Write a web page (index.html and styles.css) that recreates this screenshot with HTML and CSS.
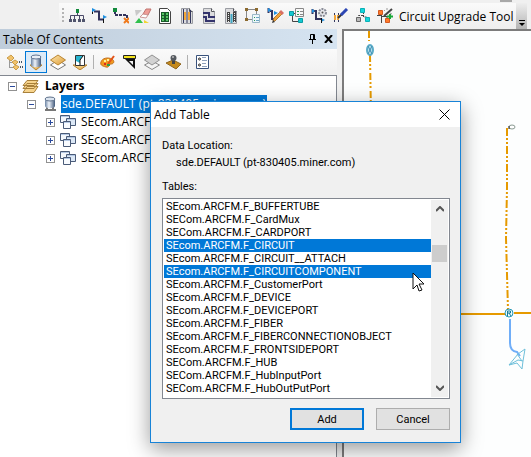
FILE: index.html
```html
<!DOCTYPE html>
<html lang="en">
<head>
    <meta charset="UTF-8">
    <meta name="viewport" content="width=device-width, initial-scale=1.0">
    <title>Add Table</title>
    <link rel="stylesheet" href="styles.css">
</head>
<body>

    <!-- shapes used more than once -->
    <svg class="defs" aria-hidden="true">
        <defs>
            <linearGradient id="metal"><stop offset="0" stop-color="#6b83a3"/><stop offset=".4" stop-color="#eef3fa"/><stop offset="1" stop-color="#41587a"/></linearGradient>
            <linearGradient id="gold" x2="1" y2="1"><stop offset="0" stop-color="#ffe9b0"/><stop offset="1" stop-color="#dc9a35"/></linearGradient>
            <g id="file"><path d="M2.500 .5h8l3 3v12h-11z" fill="#dcdcde" stroke="#9a9ca2"/><path d="M10.500 .5v3h3" fill="#fff" stroke="#55575c"/></g>
            <g id="tables"><path d="M.5 .5h9v7h-9z" fill="#f3f7fc" stroke="#4a5b78"/><path d="M6.500 3.500h9v7h-9z" fill="#dce8f6" stroke="#4a5b78"/><path d="M3.500 6.500h7v7h-7z" fill="#f8fbff" stroke="#4a5b78"/><path d="M1 1.500h8M4 7.500h6M7 4.500h8" stroke="#b4c8e4"/></g>
        </defs>
    </svg>

    <div class="app">
        <div class="toolbar-row">
            <div class="toolbar">
                <span class="grip"></span>
                <button class="tool" aria-label="Trace tree"><svg width="16" height="16"><path d="M8.500 4v4M1.500 11V7.500h13V11M5.500 7.500V11M10.500 7.500V11" fill="none" stroke="#4a4a68"/><path d="M7 1h3v4H7z" fill="#128a3c"/><path d="M0 11h3v3H0zM4 11h3v3H4zM9 11h3v3H9zM13 11h3v3h-3z" fill="#50546c"/></svg></button>
                <button class="tool" aria-label="Trace between flags"><svg width="16" height="16"><path d="M3 3.500h5v8h5" fill="none" stroke="#33335c" stroke-width="2"/><path d="M1.500 1v5M12.500 8v7" stroke="#111"/><path d="M1 0l4 2-4 2zM12 7l4 2-4 2z" fill="#1f8fe0"/></svg></button>
                <button class="tool" aria-label="Trace to fault"><svg width="16" height="16"><path d="M2 3v4h12v3" fill="none" stroke="#33335c" stroke-width="2" stroke-dasharray="3 1"/><path d="M0 0h4v4H0z" fill="#128a3c"/><path d="M11 10l5 5M16 10l-5 5" stroke="#f07a1c" stroke-width="2"/></svg></button>
                <button class="tool" aria-label="Erase trace"><svg width="17" height="16"><path d="M0 2h7L1 8z" fill="#c9c9c9"/><path d="M8 6l3-5h5l-3 6z" fill="#ef9c96" stroke="#c07470"/><path d="M5 9l3-3 5 1-2 3z" fill="#fff" stroke="#cc9896"/><path d="M0 15l4-5 4 5z" fill="#30c04c"/><path d="M9 15v-3l5 3z" fill="#f2d533"/></svg></button>
                <button class="tool" aria-label="Rack report"><svg width="16" height="16"><path d="M2.500 .5h8l3 3v12h-11z" fill="#fff" stroke="#444"/><path d="M4 4h8v10H4z" fill="#1a5c2b"/><path d="M5 5h2v2H5zM9 5h2v2H9zM5 8h2v2H5zM9 8h2v2H9zM5 11h2v2H5zM9 11h2v2H9z" fill="#57c765"/></svg></button>
                <button class="tool" aria-label="Fiber report"><svg width="16" height="16"><use href="#file"/><path d="M4.500 1v14M8 1v14M11.500 2v13" stroke="#34385e"/><path d="M6 4v8M10 4v8" stroke="#f2a63a" stroke-width="2"/></svg></button>
                <button class="tool" aria-label="Circuit report"><svg width="16" height="16"><use href="#file"/><path d="M2 5h6v4h6M2 9h3v4h9" fill="none" stroke="#33336c" stroke-width="2"/></svg></button>
                <button class="tool" aria-label="Device report"><svg width="16" height="16"><use href="#file"/><path d="M4 4h3v10H4zM10 4h3v10h-3z" fill="#444"/><path d="M5.500 5v9M11.500 5v9" stroke="#eee" stroke-dasharray="1 1"/><path d="M8.500 6v9" stroke="#43a8c4" stroke-width="2"/></svg></button>
                <button class="tool" aria-label="Select area"><svg width="16" height="16"><path d="M1.500 1.500h10v10h-10z" fill="none" stroke="#888"/><path d="M0 0h3v3H0zM10 0h3v3h-3zM0 10h3v3H0z" fill="#8c6a2f"/><path d="M7.500 6.500h7v8h-7z" fill="#eef7fb" stroke="#9ab8c8"/><path d="M9 9.500h1M9 12.500h1" stroke="#2a9a50"/><path d="M11 9.500h3M11 12.500h3" stroke="#6ba5c4"/></svg></button>
                <button class="tool" aria-label="Edit path"><svg width="17" height="16"><path d="M1.500 0v5M3 3h2v8h2" fill="none" stroke="#33335c" stroke-width="2"/><path d="M1 0l4 2-4 2zM7 3l4 2-4 2z" fill="#1f8fe0"/><path d="M6 13l1-3 6-6 2 2-7 7z" fill="#f3a338" stroke="#b47c38"/><path d="M12 4l2-2 3 3-2 2z" fill="#d86f65"/><path d="M5 15l1-3 2 2z" fill="#333"/></svg></button>
                <button class="tool" aria-label="Connection list"><svg width="16" height="16"><path d="M3.500 8v5.500H9M4 5.500h4" fill="none" stroke="#444"/><path d="M.5 3.500h4v4h-4zM9.500 10.500h4v4h-4z" fill="#13c8d0" stroke="#0a9ca4"/><path d="M6.500 .5h8v8h-8z" fill="#f8f8f8" stroke="#888"/><path d="M8 3.500h2M8 6.500h2" stroke="#2a9a50"/><path d="M11 3.500h3M11 6.500h3" stroke="#888"/></svg></button>
                <button class="tool" aria-label="Trace settings"><svg width="16" height="16"><path d="M1.500 1v5M3 3h2v8h6" fill="none" stroke="#33335c" stroke-width="2"/><path d="M1 1l3 2-3 2zM10 10l4 2-4 2z" fill="#1f8fe0"/><path d="M10.500 10v5" stroke="#111"/><circle cx="11.500" cy="4.500" r="3.500" fill="#e8e8ec" stroke="#888b96" stroke-width="2" stroke-dasharray="2 1"/><circle cx="11.500" cy="4.500" r="1" fill="#555"/></svg></button>
                <button class="tool" aria-label="Splice"><svg width="16" height="16"><path d="M1.500 5v9M5.500 5v9" stroke="#34385e"/><path d="M1 7h2v5H1zM4 7h2v5H4z" fill="#f2a63a"/><path d="M5 10l5-5" stroke="#333" stroke-width="2"/><path d="M8 7l6-6" stroke="#2c46b4" stroke-width="3"/></svg></button>
                <button class="tool" aria-label="Network"><svg width="16" height="16"><path d="M8.500 4v5h4v2M8 7.500H3.500V11" fill="none" stroke="#444" stroke-dasharray="2 1"/><path d="M5.500 .5h4v4h-4zM10.500 9.500h4v4h-4z" fill="#13d6dc" stroke="#0ab0b6"/><path d="M1.500 9.500h4v4h-4z" fill="#b9b9b9" stroke="#666"/></svg></button>
                <button class="tool" aria-label="Upgrade circuit"><svg width="16" height="16"><path d="M4.500 6v9M4 8.500h6V12M0 7.500h4" fill="none" stroke="#444"/><path d="M1.500 2.500h4v4h-4zM8.500 10.500h4v4h-4z" fill="#ff7a2a" stroke="#d45a20"/><path d="M7 8l8-7" stroke="#444" stroke-width="2"/><path d="M7 2l1 1M10 0v2M13 5l2 1" stroke="#999"/><path d="M13 6v5M10 8.500h6" stroke="#18a838" stroke-width="2"/></svg></button>
                <button class="text-tool">Circuit Upgrade Tool</button>
                <button class="overflow" aria-label="Toolbar options"><svg width="6" height="6"><path d="M0 .5h6" stroke="#000"/><path d="M0 3h6L3 6z"/></svg></button>
            </div>
        </div>

        <div class="workspace">
            <div class="toc">
                <div class="toc-header">
                    <span>Table Of Contents</span>
                    <button class="pin" aria-label="Auto hide"><svg width="7" height="10"><path d="M1.500 5V.5h4V5M0 5.500h7M3.500 6v4M4.500 1v4" fill="none" stroke="#000"/></svg></button>
                    <button aria-label="Close panel"><svg width="9" height="8"><path d="M1 0l7 8M8 0L1 8" stroke="#000" stroke-width="2"/></svg></button>
                </div>
                <div class="toc-tools">
                    <button aria-label="List by drawing order"><svg width="17" height="16"><path d="M3.500 6v8M3 8.500h5M3 13.500h5" fill="none" stroke="#999"/><path d="M1 4l4-3 3 3-3 3zM6 8l3-2 3 2-3 3zM7 13l3-2 3 2-3 3z" fill="#f2c36c" stroke="#c99c4a"/><path d="M13 8h4M14 13h3" stroke="#456" stroke-width="2" stroke-dasharray="1 1"/></svg></button>
                    <button class="active" aria-label="List by source"><svg width="16" height="17"><path d="M2 11h12l-6 5z" fill="url(#gold)" stroke="#b98431"/><path d="M3 3v8c0 3 10 3 10 0V3z" fill="url(#metal)"/><ellipse cx="8" cy="3" rx="5" ry="2" fill="#e8eef6" stroke="#5f7391"/></svg></button>
                    <button aria-label="List by visibility"><svg width="16" height="16"><path d="M.5 11L8 6l7.500 5L8 15.500z" fill="#fff" stroke="#777"/><path d="M.5 6L8 1l7.500 5L8 11z" fill="url(#gold)" stroke="#b98431"/></svg></button>
                    <button aria-label="List by selection"><svg width="16" height="16"><path d="M1 11h14l-7 5z" fill="url(#gold)" stroke="#b98431"/><path d="M3.500 1.500h9v10h-9z" fill="#fff" stroke="#333"/><path d="M4 2h7l-3 4v3L4 7z" fill="#27b5d0"/><path d="M11 2L8 6v5" fill="none" stroke="#111"/></svg></button>
                    <span class="separator"></span>
                    <button aria-label="Symbology"><svg width="16" height="16"><path d="M1 8c1-4 7-5 11-3 3 2 2 5-1 5s-1 4-5 3S0 11 1 8z" fill="#f29a1e" stroke="#c0701c"/><path d="M4 7h2M7 6h2" stroke="#fff29a" stroke-width="2"/><path d="M4 10h2" stroke="#d92a20" stroke-width="2"/><path d="M8 10l6-8" stroke="#e2541b" stroke-width="2"/><path d="M7 11h3" stroke="#2ba04a" stroke-width="2"/></svg></button>
                    <button aria-label="Scale"><svg width="16" height="16"><path d="M1.500 1.500h12v3h-12z" fill="#f4e41e" stroke="#222"/><path d="M3 5h10v10zM7 7l4 4V7z" fill="#111" fill-rule="evenodd"/></svg></button>
                    <button aria-label="Layers"><svg width="16" height="16"><path d="M.5 11L8 7l7.500 4L8 15.500z" fill="#f4f4f4" stroke="#888"/><path d="M.5 6L8 1l7.500 5L8 11z" fill="#d2d2d2" stroke="#909090"/></svg></button>
                    <button aria-label="Stamp"><svg width="16" height="16"><path d="M0 9l7-3 8 4-5 5z" fill="#c58a1c" stroke="#8f6620"/><path d="M6 5h3v5H6z" fill="#444"/><circle cx="7.500" cy="4" r="3" fill="#555a60"/><circle cx="7" cy="3" r="1" fill="#bbb"/></svg></button>
                    <span class="separator"></span>
                    <button aria-label="Options"><svg width="13" height="15"><path d="M.5 .5h12v13H.5z" fill="#fff" stroke="#39527c"/><circle cx="3.500" cy="4" r="1" fill="none" stroke="#222"/><circle cx="3.500" cy="10" r="1" fill="none" stroke="#222"/><path d="M6 2.500h4M6 5.500h5M6 8.500h4M6 11.500h5" stroke="#8fa1bb"/></svg></button>
                </div>
                <ul class="tree">
                    <li>
                        <div class="node"><button class="expander" aria-label="Collapse"></button><svg width="18" height="16"><path d="M5 8.500h11l-4 6H1zM5 5.500h11l-4 5H1zM5 2.500h11l-4 5H1z" fill="#f7d48d" stroke="#a8803a"/></svg><b>Layers</b></div>
                        <ul>
                            <li>
                                <div class="node"><button class="expander" aria-label="Collapse"></button><svg width="15" height="16"><path d="M6 10v3M12 10v3M4 14h11" stroke="#777" stroke-width="2"/><path d="M4 3v7c0 3 10 3 10 0V3z" fill="url(#metal)"/><ellipse cx="9" cy="3" rx="5" ry="2" fill="#dbe4ef" stroke="#60728c"/></svg><span class="selected">sde.DEFAULT (pt-830405.miner.com)</span></div>
                                <ul>
                                    <li><div class="node"><button class="expander closed" aria-label="Expand"></button><svg width="16" height="14"><use href="#tables"/></svg><span>SEcom.ARCF</span></div></li>
                                    <li><div class="node"><button class="expander closed" aria-label="Expand"></button><svg width="16" height="14"><use href="#tables"/></svg><span>SEcom.ARCF</span></div></li>
                                    <li><div class="node"><button class="expander closed" aria-label="Expand"></button><svg width="16" height="14"><use href="#tables"/></svg><span>SEcom.ARCF</span></div></li>
                                </ul>
                            </li>
                        </ul>
                    </li>
                </ul>
            </div>

            <div class="map">
                <svg width="100%" height="100%">
                    <g fill="none" stroke="#e69a00" stroke-width="2">
                        <path d="M25 0v10M26 24l1 60" stroke-dasharray="7 2 2 2 2 3"/>
                        <path d="M163 97v60l-1 50 2 72" stroke-dasharray="8 2 2 2 2 2"/>
                        <path d="M110 283h52M170 282h20"/>
                    </g>
                    <path d="M165 97h2v-2" fill="none" stroke="#e69a00" stroke-width="2"/>
                    <ellipse cx="168" cy="96" rx="3" ry="2" fill="#fff" stroke="#8a9a92"/>
                    <path d="M165 95v3" stroke="#222"/>
                    <ellipse cx="26" cy="19" rx="3" ry="5" fill="#b5dff0" stroke="#5bacc8" stroke-width="2"/>
                    <path d="M24 15l4 8M28 15l-4 8" stroke="#3b8cae"/>
                    <path d="M166 288v24q0 8 7 9l3 4" fill="none" stroke="#70aef8" stroke-width="2"/>
                    <circle cx="165" cy="282" r="4" fill="#eefafd" stroke="#2698b5"/>
                    <path d="M163.500 285v-5h3v2h-3M165 282l2 3" fill="none" stroke="#177d9b"/>
                    <path d="M181 318l-7 5-9 11 8-2 5 6 1-8 2-12zM173 323l5 7M165 334l9-5 5 1" fill="none" stroke="#6fc0da"/>
                </svg>
            </div>
        </div>
    </div>

    <div class="dialog" role="dialog" aria-labelledby="dialog-title">
        <div class="title-bar">
            <span id="dialog-title">Add Table</span>
            <button aria-label="Close"><svg width="11" height="11"><path d="M.5 .5l10 10M10.500 .5l-10 10" stroke="#000"/></svg></button>
        </div>
        <form class="dialog-body">
            <p>Data Location:</p>
            <p class="location">sde.DEFAULT (pt-830405.miner.com)</p>
            <label for="tables-list">Tables:</label>
            <div class="list-box">
                <select id="tables-list" multiple size="15">
                    <option>SEcom.ARCFM.F_BUFFERTUBE</option>
                    <option>SECom.ARCFM.F_CardMux</option>
                    <option>SECom.ARCFM.F_CARDPORT</option>
                    <option selected>SEcom.ARCFM.F_CIRCUIT</option>
                    <option>SEcom.ARCFM.F_CIRCUIT__ATTACH</option>
                    <option selected>SEcom.ARCFM.F_CIRCUITCOMPONENT</option>
                    <option>SEcom.ARCFM.F_CustomerPort</option>
                    <option>SEcom.ARCFM.F_DEVICE</option>
                    <option>SEcom.ARCFM.F_DEVICEPORT</option>
                    <option>SEcom.ARCFM.F_FIBER</option>
                    <option>SEcom.ARCFM.F_FIBERCONNECTIONOBJECT</option>
                    <option>SEcom.ARCFM.F_FRONTSIDEPORT</option>
                    <option>SECom.ARCFM.F_HUB</option>
                    <option>SECom.ARCFM.F_HubInputPort</option>
                    <option>SECom.ARCFM.F_HubOutPutPort</option>
                </select>
                <div class="scrollbar">
                    <svg width="8" height="6"><path d="M0 5l4-4 4 4" fill="none" stroke="#555" stroke-width="2"/></svg>
                    <span class="thumb"></span>
                    <svg width="8" height="6"><path d="M0 1l4 4 4-4" fill="none" stroke="#555" stroke-width="2"/></svg>
                </div>
            </div>
            <div class="buttons">
                <button type="button" class="default">Add</button>
                <button type="button">Cancel</button>
            </div>
        </form>
        <svg class="cursor" width="13" height="20"><path d="M1 1v16l4-4 2 6 3-1-3-6h5z" fill="#fff" stroke="#111"/></svg>
    </div>

</body>
</html>
```
FILE: styles.css
```css
* {
    box-sizing: border-box;
}
body {
    margin: 0;
    font-family: "Open Sans", "Noto Sans", sans-serif;
    font-size: 12px;
    color: #000;
    background-color: #f0f0f0;
    overflow: hidden;
}
button {
    padding: 0;
    border: none;
    background: none;
    font: inherit;
    color: inherit;
}
svg {
    display: block;
    flex: none;
}
p, ul {
    margin: 0;
    padding: 0;
    list-style: none;
}
.defs {
    position: absolute;
    width: 0;
    height: 0;
}
.app {
    display: flex;
    flex-direction: column;
    min-height: 100vh;
}

/* top toolbar */
.toolbar-row {
    display: flex;
    padding: 3px 0 0 59px;
    /* end of the toolbar above */
    background: linear-gradient(#a8a8a8, #a8a8a8) right 19px top / 12px 2px no-repeat;
}
.toolbar {
    display: flex;
    align-items: center;
    height: 26px;
    background: linear-gradient(#fafafa, #eeeeee);
}
.grip {
    width: 2px;
    height: 16px;
    margin: 0 5px 0 3px;
    background: repeating-linear-gradient(#b4b4b4 0 2px, transparent 2px 4px);
}
.tool {
    width: 16px;
    margin-right: 6px;
    flex: none;
}
.text-tool {
    width: 117px;
    flex: none;
    text-align: left;
    white-space: nowrap;
}
.overflow {
    display: flex;
    align-items: flex-end;
    justify-content: center;
    width: 11px;
    height: 26px;
    padding-bottom: 3px;
    background: linear-gradient(#eeeeee, #b4b4b4);
}

.workspace {
    display: flex;
    flex: 1;
    gap: 5px;
}

/* table of contents */
.toc {
    display: flex;
    flex-direction: column;
    width: 337px;
    flex: none;
}
.toc-header {
    display: flex;
    align-items: center;
    height: 20px;
    padding: 0 4px 0 3px;
    background: linear-gradient(to right, #bfcddb, #d6e4f1);
}
.toc-header span {
    flex: 1;
}
.toc-header .pin {
    margin-right: 8px;
}
.toc-tools {
    display: flex;
    align-items: center;
    height: 26px;
    padding-left: 3px;
    background: linear-gradient(#fafafa, #f0f0f0);
}
.toc-tools button {
    display: flex;
    align-items: center;
    justify-content: center;
    width: 22px;
    height: 22px;
}
.toc-tools .active {
    border: 1px solid #0078d7;
    background-color: #dcebf8;
}
.separator {
    width: 1px;
    height: 14px;
    margin: 0 3px 0 2px;
    background-color: #b0b0b0;
}
.tree {
    flex: 1;
    padding: 1px 0 0 8px;
    background-color: #fff;
    border: solid #828790;
    border-width: 1px 1px 0 0;
}
.tree ul {
    padding-left: 19px;
}
.node {
    display: flex;
    align-items: center;
    gap: 5px;
    height: 18px;
    line-height: 18px;
    white-space: nowrap;
}
.node .selected {
    padding: 0 1px;
    color: #fff;
    background-color: #0078d7;
}
.expander {
    width: 9px;
    height: 9px;
    border: 1px solid #919191;
    background: linear-gradient(#2b4a9c, #2b4a9c) center / 5px 1px no-repeat #fff;
}
.expander.closed {
    background: linear-gradient(#2b4a9c, #2b4a9c) center / 5px 1px no-repeat, linear-gradient(#2b4a9c, #2b4a9c) center / 1px 5px no-repeat #fff;
}

/* map view */
.map {
    position: relative;
    flex: 1;
    background-color: #fdfefe;
    border: solid #7c7c7c;
    border-width: 2px 0 0 2px;
}
.map svg {
    position: absolute;
    inset: 0;
}

/* add table dialog */
.dialog {
    position: absolute;
    left: 150px;
    top: 101px;
    width: 311px;
    font-family: Roboto, "Liberation Sans", sans-serif;
    font-size: 11px;
    line-height: 13px;
    background-color: #f0f0f0;
    border: 1px solid #1883d7;
    box-shadow: 0 6px 20px rgba(0, 0, 0, 0.4);
}
.title-bar {
    display: flex;
    align-items: center;
    justify-content: space-between;
    height: 25px;
    padding: 0 10px 0 3px;
    font-family: "Open Sans", "Noto Sans", sans-serif;
    font-size: 12px;
    background-color: #fff;
}
.dialog-body {
    padding: 12px 10px 12px 11px;
}
.location {
    padding: 4px 0 11px 14px;
}
.dialog label {
    display: block;
    margin-bottom: 5px;
}
.list-box {
    display: flex;
    height: 201px;
    padding: 1px;
    background-color: #fff;
    border: 1px solid #828790;
}
select {
    flex: 1;
    min-width: 0;
    height: 197px;
    padding: 0;
    border: none;
    border-radius: 0;
    outline: none;
    font: inherit;
    background-color: #fff;
    scrollbar-width: none;
}
option {
    min-height: 13px;
    height: 13px;
    padding: 0 2px;
    line-height: 13px;
    color: #000;
}
option:checked {
    background-image: linear-gradient(#0078d7, #0078d7);
    -webkit-text-fill-color: #fff;
}
.scrollbar {
    display: flex;
    flex-direction: column;
    align-items: center;
    width: 17px;
    padding: 6px 0;
    background-color: #f0f0f0;
}
.thumb {
    width: 15px;
    height: 17px;
    margin: 33px 0 auto;
    background-color: #cdcdcd;
}
.buttons {
    display: flex;
    justify-content: flex-end;
    gap: 12px;
    padding-top: 9px;
}
.buttons button {
    width: 74px;
    height: 22px;
    background-color: #e1e1e1;
    border: 1px solid #adadad;
}
.buttons .default {
    border: 2px solid #0078d7;
}
.cursor {
    position: absolute;
    left: 261px;
    top: 170px;
}
```
